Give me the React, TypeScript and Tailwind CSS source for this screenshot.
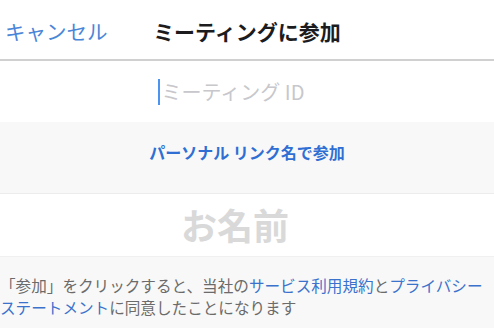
import React from "react";

const font = { fontFamily: '"Noto Sans CJK JP", "Noto Sans", sans-serif' };

export default function App() {
  return (
    <div
      className="w-[494px] h-[328px] overflow-hidden bg-white flex flex-col"
      style={font}
    >
      {/* Header */}
      <div className="relative h-[61px] flex items-center justify-center border-b-2 border-[#d0d0d0] shrink-0">
        <span className="absolute left-[5px] top-[18px] text-[20.5px] leading-[26px] text-[#4a86d8]">
          キャンセル
        </span>
        <span className="text-[21px] leading-[26px] font-bold text-[#1c1c1e] mt-[2px]">
          ミーティングに参加
        </span>
      </div>
      {/* Meeting ID */}
      <div className="h-[61px] flex items-center justify-center shrink-0">
        <div className="flex items-center ml-[-32px]">
          <div className="w-[2px] h-[26px] bg-[#4b94f0] mr-[2px]" />
          <span className="text-[20px] leading-[26px] text-[#c7c7cc]">
            ミーティング ID
          </span>
        </div>
      </div>
      {/* Personal link */}
      <div className="h-[72px] bg-[#f8f8f8] border-b border-[#ececec] flex items-center justify-center shrink-0">
        <span className="text-[16px] leading-[22px] font-bold text-[#2f6fd3] mt-[-12px]">
          パーソナル リンク名で参加
        </span>
      </div>
      {/* Name */}
      <div className="h-[62px] flex items-center justify-center shrink-0">
        <span className="text-[36px] leading-[40px] font-bold text-[#d9d9d9] mt-[-2px] ml-[-24px]">
          お名前
        </span>
      </div>
      {/* Terms */}
      <div className="flex-1 bg-[#f8f8f8] border-t border-[#f0f0f0] pt-[17px] text-[15.6px] leading-[22px] text-[#6b6b6b]">
        <div className="whitespace-nowrap">
          「参加」をクリックすると、当社の
          <span className="text-[#3a72cc]">サービス利用規約</span>と
          <span className="text-[#3a72cc]">プライバシー</span>
        </div>
        <div className="whitespace-nowrap">
          <span className="text-[#3a72cc]">ステートメント</span>
          に同意したことになります
        </div>
      </div>
    </div>
  );
}
